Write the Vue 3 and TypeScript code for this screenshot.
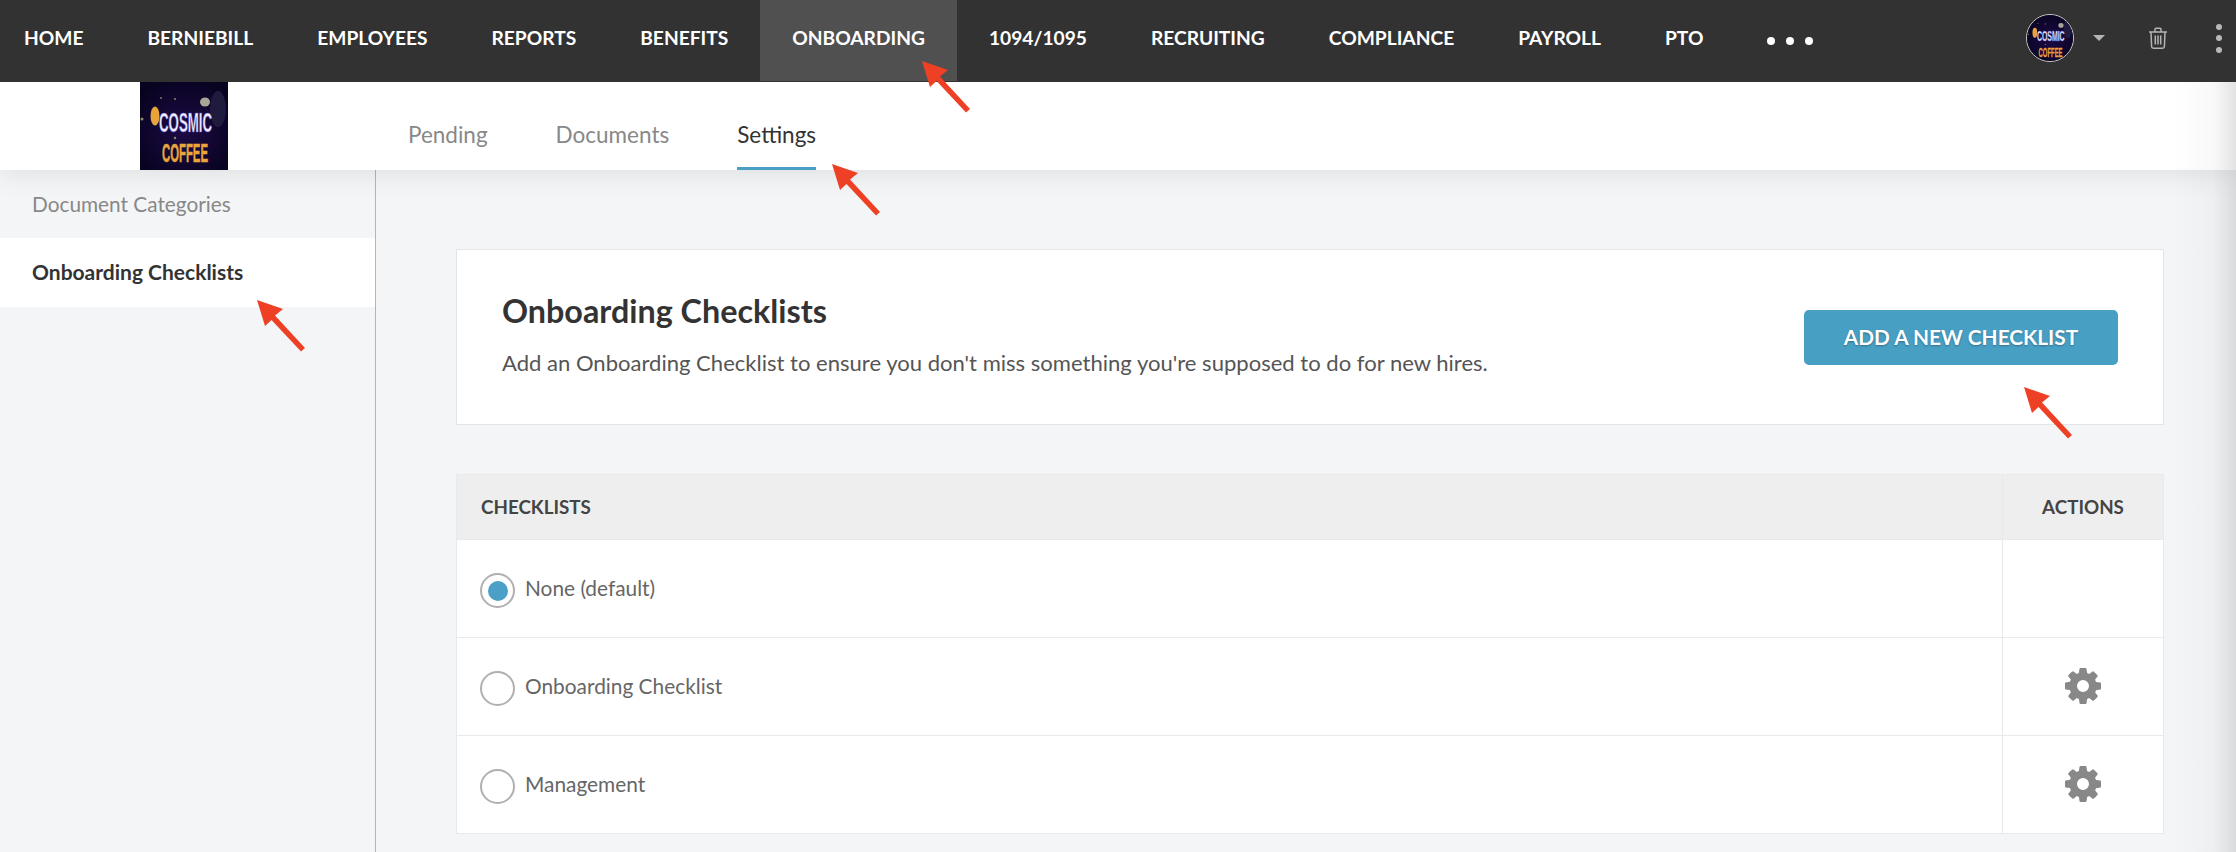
<script setup lang="ts">
const navItems: string[] = ['HOME', 'BERNIEBILL', 'EMPLOYEES', 'REPORTS', 'BENEFITS', 'ONBOARDING', '1094/1095', 'RECRUITING', 'COMPLIANCE', 'PAYROLL', 'PTO']
const subTabs: string[] = ['Pending', 'Documents', 'Settings']
const rows = [
  { name: 'None (default)', checked: true, gear: false },
  { name: 'Onboarding Checklist', checked: false, gear: true },
  { name: 'Management', checked: false, gear: true },
]
const arrows = [
  { x: 922, y: 61 },
  { x: 832, y: 164 },
  { x: 257, y: 300 },
  { x: 2024, y: 387 },
]
const gear = 'M1152 896q0-106-75-181t-181-75-181 75-75 181 75 181 181 75 181-75 75-181zm512-109v222q0 12-8 23t-20 13l-185 28q-19 54-39 91 35 50 107 138 10 12 10 25t-9 23q-27 37-99 108t-94 71q-12 0-26-9l-138-108q-44 23-91 38-16 136-29 186-7 28-36 28h-222q-14 0-24.500-8.500t-11.500-21.500l-28-184q-49-16-90-37l-141 107q-10 9-25 9-14 0-25-11-126-114-165-168-7-10-7-23 0-12 8-23 15-21 51-66.500t54-70.500q-27-50-41-99l-183-27q-13-2-21-12.500t-8-23.500v-222q0-12 8-23t19-13l186-28q14-46 39-92-40-57-107-138-10-12-10-24 0-10 9-23 26-36 98.500-107.500t94.500-71.500q13 0 26 10l138 107q44-23 91-38 16-136 29-186 7-28 36-28h222q14 0 24.500 8.500t11.500 21.500l28 184q49 16 90 37l142-107q9-9 24-9 13 0 25 10 129 119 165 170 7 8 7 22 0 12-8 23-15 21-51 66.500t-54 70.500q26 50 41 98l183 28q13 2 21 12.500t8 23.500z'
</script>

<template>
  <div class="page">
    <header class="topbar">
      <nav class="nav">
        <a v-for="item in navItems" :key="item" class="nav-item" :class="{ active: item === 'ONBOARDING' }">{{ item }}</a>
        <span class="more"><i></i><i></i><i></i></span>
      </nav>
      <div class="tools">
        <span class="avatar">
          <svg viewBox="0 0 88 88" width="46" height="46"><use href="#cosmic-logo" /></svg>
        </span>
        <span class="caret"></span>
        <svg class="trash" viewBox="0 0 20 22" width="20" height="22" fill="none" stroke="#b4b4b4" stroke-width="1.5">
          <path d="M1 5h18" />
          <path d="M7 5V2.200q0-1 1-1h4q1 0 1 1V5" />
          <path d="M3 5l.6 14.500q.1 1.700 1.700 1.700h9.400q1.600 0 1.700-1.700L17 5" />
          <path d="M7.300 8.500v9M10 8.500v9M12.700 8.500v9" />
        </svg>
        <span class="kebab"><i></i><i></i><i></i></span>
      </div>
    </header>

    <div class="subnav">
      <svg class="logo" viewBox="0 0 88 88" width="88" height="88">
        <defs>
          <radialGradient id="space" cx="50%" cy="55%" r="65%">
            <stop offset="0" stop-color="#1d0a45" />
            <stop offset="1" stop-color="#07031f" />
          </radialGradient>
          <symbol id="cosmic-logo" viewBox="0 0 88 88">
            <rect width="88" height="88" fill="url(#space)" />
            <ellipse cx="78" cy="27" rx="8" ry="18" fill="#1f1b3e" />
            <ellipse cx="65" cy="20" rx="5" ry="4.500" fill="#a6a596" />
            <ellipse cx="15" cy="34" rx="4.500" ry="9.500" fill="#e8a43a" />
            <circle cx="2" cy="37" r="1.500" fill="#8f8a5e" />
            <circle cx="35" cy="17" r="1" fill="#8f8a5e" />
            <circle cx="21" cy="16" r="1" fill="#777" />
            <circle cx="35" cy="56" r="1.200" fill="#8f8a5e" />
            <text x="19" y="50" textLength="53" lengthAdjust="spacingAndGlyphs" class="logo-cosmic">COSMIC</text>
            <text x="22" y="80" textLength="46" lengthAdjust="spacingAndGlyphs" class="logo-coffee">COFFEE</text>
          </symbol>
        </defs>
        <use href="#cosmic-logo" />
      </svg>
      <div class="tabs">
        <a v-for="tab in subTabs" :key="tab" class="tab" :class="{ current: tab === 'Settings' }">{{ tab }}</a>
      </div>
    </div>

    <div class="body">
      <aside class="sidebar">
        <a class="side-item">Document Categories</a>
        <a class="side-item selected">Onboarding Checklists</a>
      </aside>
      <main class="main">
        <section class="card">
          <div class="card-text">
            <h1 class="title">Onboarding Checklists</h1>
            <p class="desc">Add an Onboarding Checklist to ensure you don't miss something you're supposed to do for new hires.</p>
          </div>
          <button class="add-btn">ADD A NEW CHECKLIST</button>
        </section>

        <section class="table">
          <div class="row head">
            <div class="cell-main">CHECKLISTS</div>
            <div class="cell-action">ACTIONS</div>
          </div>
          <div v-for="row in rows" :key="row.name" class="row">
            <div class="cell-main">
              <span class="radio" :class="{ on: row.checked }"></span>
              <span class="label">{{ row.name }}</span>
            </div>
            <div class="cell-action">
              <svg v-if="row.gear" class="gear" viewBox="0 0 1792 1792" width="42" height="42" fill="#888"><path :d="gear" /></svg>
            </div>
          </div>
        </section>
      </main>
    </div>

    <div class="edge-shade"></div>

    <svg
      v-for="(a, i) in arrows"
      :key="i"
      class="arrow"
      :style="{ left: a.x + 'px', top: a.y + 'px' }"
      viewBox="0 0 50 54"
      width="50"
      height="54"
    >
      <path d="M0 0L26 9 18 15.500 48 48 44 51.500 14.500 20 8 26Z" fill="#ee4024" />
    </svg>
  </div>
</template>

<style>
html, body { margin: 0; padding: 0; background: #f4f5f7; }
</style>

<style scoped>
.page {
  position: relative;
  display: flex;
  flex-direction: column;
  width: 2236px;
  height: 852px;
  overflow: hidden;
  background: #f4f5f7;
  font-family: Lato, "Open Sans", sans-serif;
  color: #333;
}
.topbar {
  flex: none;
  height: 82px;
  display: flex;
  justify-content: space-between;
  background: #323232;
  position: relative;
  z-index: 3;
}
.nav { display: flex; padding-left: 0; }
.nav-item {
  height: 81px;
  padding: 0 32px 6px;
  box-sizing: border-box;
  display: flex;
  align-items: center;
  color: #fff;
  font-size: 19.200px;
  font-weight: 700;
}
.nav-item:first-child { padding-left: 24px; }
.nav-item.active { background: #505050; }
.more { display: flex; align-items: center; gap: 11px; margin: 3px 0 0 32px; height: 76px; }
.more i { width: 8px; height: 8px; border-radius: 50%; background: #fff; }
.tools { display: flex; align-items: center; padding: 0 14px 6px 0; }
.avatar {
  width: 46px;
  height: 46px;
  border: 1.500px solid #c9c9c9;
  border-radius: 50%;
  overflow: hidden;
  display: block;
}
.avatar svg { display: block; }
.caret {
  width: 0;
  height: 0;
  margin-left: 19px;
  border-left: 6px solid transparent;
  border-right: 6px solid transparent;
  border-top: 6px solid #b4b4b4;
}
.trash { margin-left: 43px; }
.kebab { display: flex; flex-direction: column; gap: 5.500px; margin-left: 48px; }
.kebab i { width: 6px; height: 6px; border-radius: 50%; background: #b8b8b8; }
.subnav {
  flex: none;
  height: 88px;
  display: flex;
  background: #fff;
  position: relative;
  z-index: 2;
  box-shadow: 0 2px 30px rgba(0, 0, 0, 0.1);
}
.logo { display: block; margin-left: 140px; }
.tabs { display: flex; gap: 68px; margin-left: 180px; }
.tab {
  height: 88px;
  padding-top: 20px;
  box-sizing: border-box;
  display: flex;
  align-items: center;
  font-size: 22.500px;
  color: #888;
  border-bottom: 3px solid transparent;
}
.tab.current { color: #333; border-bottom-color: #4a9fc5; }
.body { flex: 1; display: flex; min-height: 0; }
.sidebar {
  flex: none;
  width: 375px;
  border-right: 1px solid #b5b5b5;
  display: flex;
  flex-direction: column;
}
.side-item {
  height: 68px;
  padding-bottom: 2px;
  box-sizing: border-box;
  display: flex;
  align-items: center;
  padding-left: 32px;
  font-size: 20.800px;
  color: #888;
}
.side-item.selected { height: 69px; background: #fff; color: #333; font-weight: 700; font-size: 21px; }
.main { flex: 1; padding: 79px 72px 0 80px; min-width: 0; }
.card {
  height: 176px;
  box-sizing: border-box;
  display: flex;
  justify-content: space-between;
  align-items: center;
  padding: 0 45px 0 45px;
  background: #fff;
  border: 1px solid #e4e5e8;
}
.card-text { padding-bottom: 6px; }
.title { margin: 0; font-size: 32.300px; font-weight: 700; color: #333; line-height: 36px; }
.desc { margin: 21px 0 0; font-size: 22.050px; color: #555; line-height: 26px; }
.add-btn {
  width: 314px;
  height: 55px;
  border: none;
  border-radius: 5px;
  background: #489fc4;
  color: #fff;
  font: 700 20.800px Lato, sans-serif;
  padding: 0 0 2px;
  text-shadow: 0 1px 2px rgba(0, 0, 0, 0.3);
}
.table {
  margin-top: 49px;
  background: #fff;
  border: 1px solid #e8e9eb;
  border-top: 0;
}
.row { display: flex; height: 98px; border-top: 1px solid #e8e9eb; box-sizing: border-box; }
.row.head {
  height: 65px;
  background: #eee;
  font-size: 18.800px;
  font-weight: 700;
  color: #444;
}
.row.head .cell-main, .row.head .cell-action { padding-bottom: 1px; }
.cell-main { flex: 1; display: flex; align-items: center; padding-left: 24px; }
.row:not(.head) .cell-main { padding-left: 23px; }
.cell-action {
  flex: none;
  width: 160px;
  box-sizing: content-box;
  display: flex;
  align-items: center;
  justify-content: center;
  border-left: 1px solid #e8e9eb;
}
.gear { margin-top: -2px; }
.radio {
  position: relative;
  margin-top: 4px;
  width: 35px;
  height: 35px;
  box-sizing: border-box;
  border: 2px solid #b0b0b0;
  border-radius: 50%;
  background: #fff;
}
.radio.on::after {
  content: "";
  position: absolute;
  left: 5.500px;
  top: 5.500px;
  width: 20px;
  height: 20px;
  border-radius: 50%;
  background: #4aa0c6;
}
.label { margin: -3px 0 0 10px; font-size: 20.850px; color: #666; }
.edge-shade {
  position: absolute;
  top: 82px;
  right: 0;
  bottom: 0;
  width: 66px;
  z-index: 4;
  pointer-events: none;
  background: linear-gradient(to right, rgba(0, 0, 0, 0), rgba(0, 0, 0, 0.025) 65%, rgba(0, 0, 0, 0.11));
}
.arrow { position: absolute; z-index: 5; pointer-events: none; }
.logo-cosmic { font: 700 27px "Liberation Sans", sans-serif; fill: #f2f0ff; stroke: #5a4fd0; stroke-width: 0.6px; }
.logo-coffee { font: 700 25px "Liberation Sans", sans-serif; fill: #e8a53c; stroke: #e8a53c; stroke-width: 0.5px; }
</style>
